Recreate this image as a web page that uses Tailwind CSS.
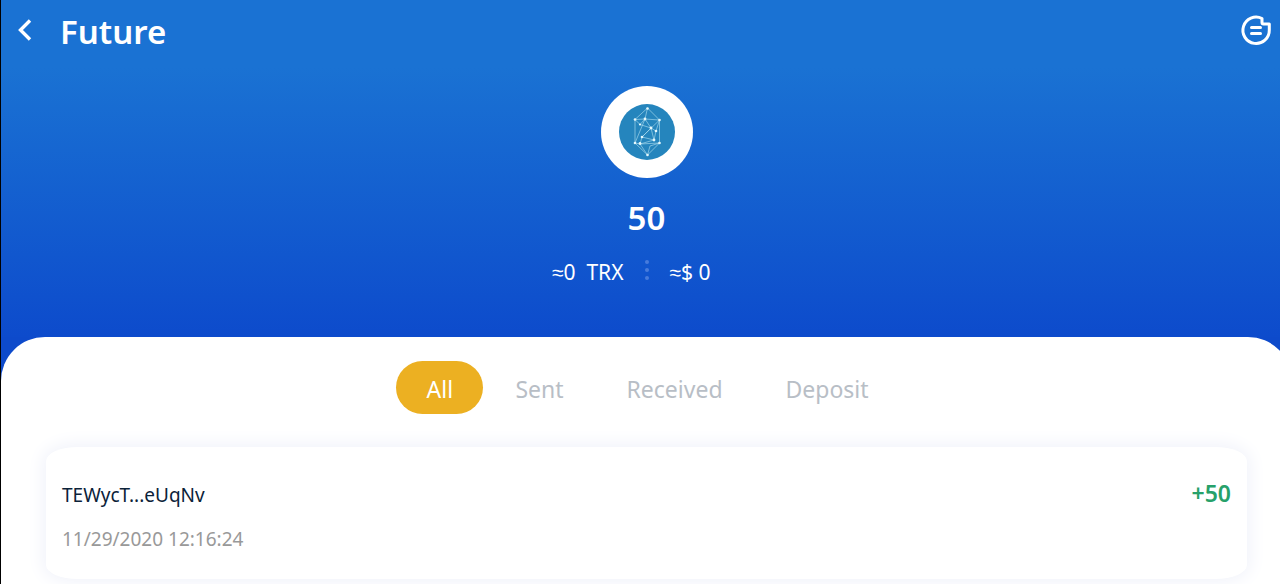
<!DOCTYPE html>
<html lang="en">
<head>
  <meta charset="UTF-8" />
  <meta name="viewport" content="width=device-width, initial-scale=1.0" />
  <title>Future</title>
  <script src="https://cdn.jsdelivr.net/npm/@tailwindcss/browser@4"></script>
</head>
<body class="bg-white overflow-hidden font-['Noto_Sans',sans-serif]">
  <div class="-mr-3 min-h-screen border-l border-black bg-[#0d4acb]">

    <header class="h-[337px] bg-linear-to-b/srgb from-[#1a72d3] from-20% to-[#0d4bcc] text-white">
      <div class="flex h-15 items-center pl-4 pr-5">
        <button aria-label="Back" class="w-[43px]">
          <svg class="h-6 w-4" viewBox="0 0 16 24" fill="none" stroke="currentColor" stroke-width="3.4">
            <path d="M13 2.500L3.500 12L13 21.500" />
          </svg>
        </button>
        <h1 class="pt-1 text-[33px] leading-10 font-semibold">Future</h1>
        <button aria-label="Details" class="ml-auto">
          <svg class="h-8 w-8" viewBox="0 0 32 32" fill="none" stroke="currentColor" stroke-width="3" stroke-linecap="round" stroke-linejoin="round">
            <path d="M22 4.500A13.200 13.200 0 1 0 29.300 16V10H23.500Q22 10 22 8.500Z" />
            <path d="M11.500 13.500H20.500M11.500 19.500H20.500" />
          </svg>
        </button>
      </div>

      <div class="flex flex-col items-center pt-[26px]">
        <div class="flex h-[92px] w-[92px] items-center justify-center rounded-full bg-white">
          <svg class="h-14 w-14" viewBox="0 0 56 56">
            <circle cx="28" cy="28" r="28" fill="#2585bd" />
            <g fill="none" stroke="#b5e3f1" stroke-width="0.6">
              <path d="M28.500 4L16 15.500V39L28.500 51L40.500 39V16ZM16 15.500L26 15L40.500 16M28.500 4L26 15L16 39M21 40L35 36" />
              <path d="M26 15L32 24L23 33L21 40L28.500 51M16 15.500L21 20.500L32 24L37 27L40.500 16L23 33M37 27L35 36L23 33M32 24L35 36M26 15L21 20.500M16 39L21 40L40.500 39M31 42L28.500 51M31 42L40.500 39" />
            </g>
            <g fill="#e5f8fc">
              <circle cx="28.500" cy="4.500" r="1.300" /><circle cx="16" cy="15.500" r="1.300" />
              <circle cx="26" cy="15" r="1.400" /><circle cx="40.500" cy="16" r="1.300" />
              <circle cx="21" cy="20.500" r="1.100" /><circle cx="32" cy="24" r="1.400" />
              <circle cx="37" cy="27" r="1.300" /><circle cx="23" cy="33" r="1.300" />
              <circle cx="16" cy="39" r="1.300" /><circle cx="21" cy="39.500" r="1.400" />
              <circle cx="35" cy="36" r="1.400" /><circle cx="40.500" cy="39" r="1.300" />
              <circle cx="28.500" cy="51" r="1.300" />
            </g>
          </svg>
        </div>
        <p class="mt-5 text-[33px] leading-10 font-semibold">50</p>
        <div class="mt-5 grid w-full grid-cols-[1fr_6px_1fr] items-center gap-x-5 text-[21px] leading-7">
          <span class="text-right whitespace-pre">≈0  TRX</span>
          <span class="flex flex-col items-center gap-1 pb-1">
            <i class="h-1 w-1 rounded-full bg-[#477bdc]"></i>
            <i class="h-1 w-1 rounded-full bg-[#477bdc]"></i>
            <i class="h-1 w-1 rounded-full bg-[#477bdc]"></i>
          </span>
          <span>≈$ 0</span>
        </div>
      </div>
    </header>

    <main class="min-h-[247px] rounded-t-[44px] bg-white px-[45px] pt-6">
      <nav class="flex justify-center pr-7 text-[23px] leading-8 text-[#b8bec6]">
        <button class="h-[53px] w-[87px] rounded-full bg-[#ecb022] pt-0.5 text-white">All</button>
        <button class="ml-8 pt-0.5">Sent</button>
        <button class="ml-[63px] pt-0.5">Received</button>
        <button class="ml-[63px] pt-0.5">Deposit</button>
      </nav>

      <a href="#" class="mt-[33px] flex h-[132px] items-start justify-between rounded-[32px/14px] bg-white px-4 pt-[34px] shadow-[0_0_18px_3px_#f0f2fa]">
        <span class="flex flex-col gap-4">
          <span class="text-[19px] leading-7 text-[#0b2239]">TEWycT...eUqNv</span>
          <span class="text-[19px] leading-7 text-[#999999]">11/29/2020 12:16:24</span>
        </span>
        <span class="text-[23px] leading-6 font-semibold text-[#27a16a]">+50</span>
      </a>
    </main>
  </div>
</body>
</html>
